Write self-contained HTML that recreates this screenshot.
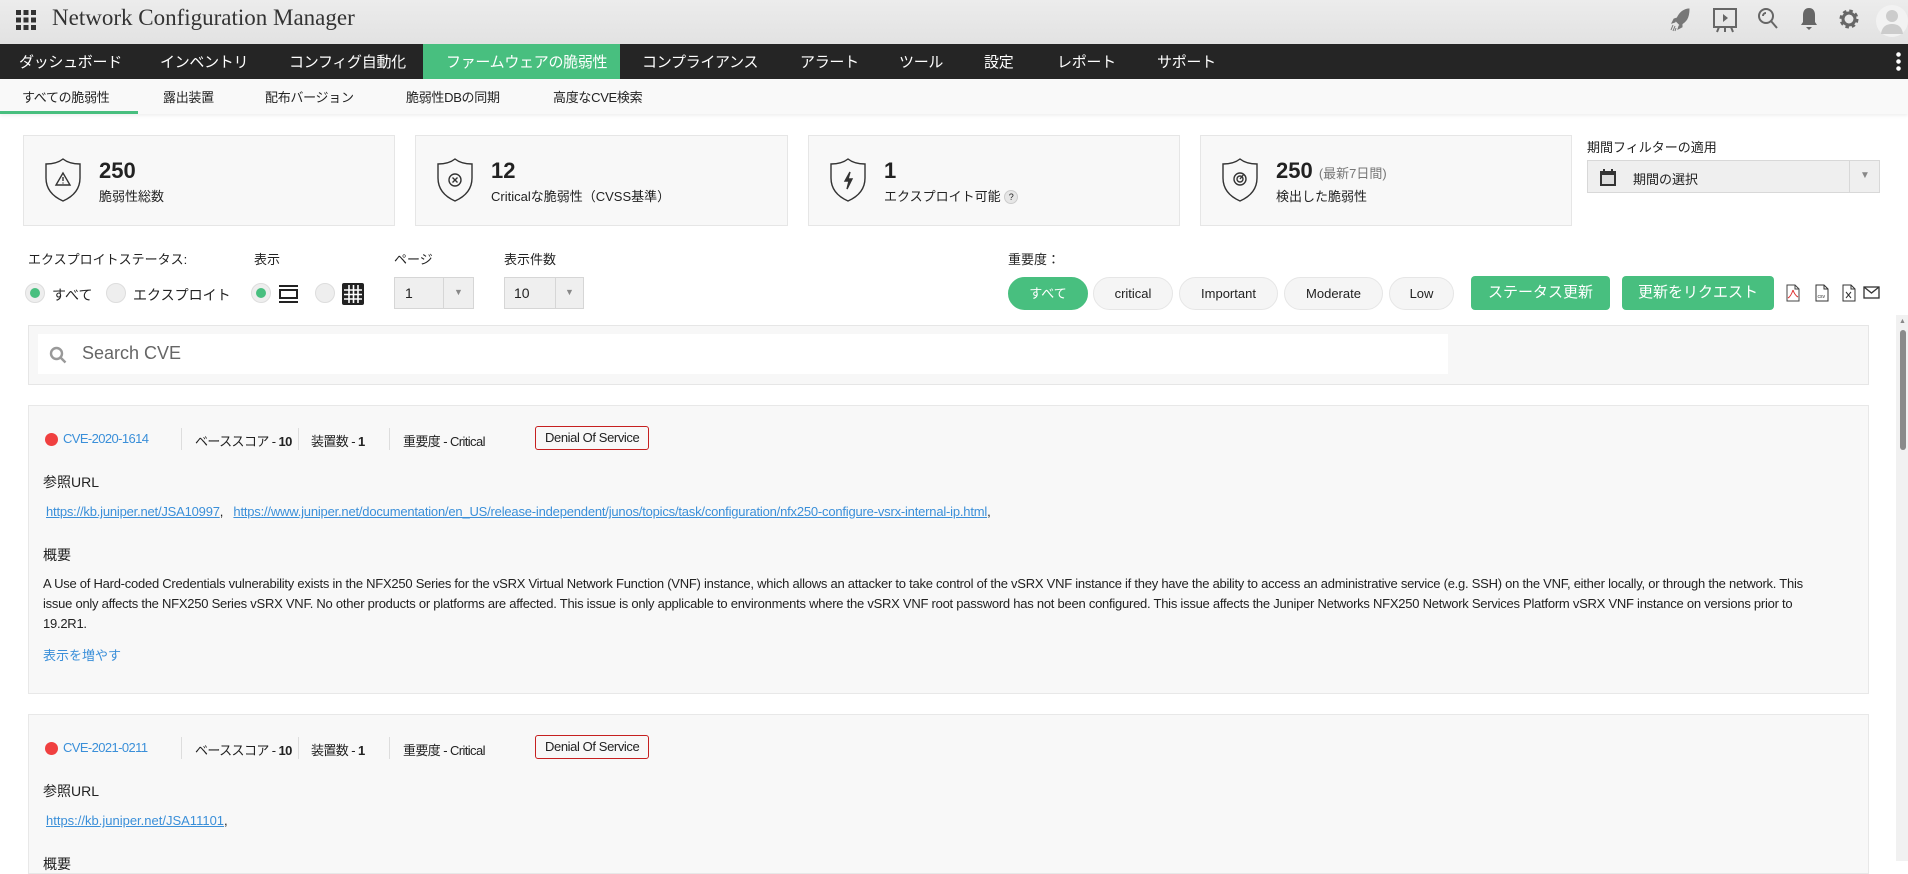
<!DOCTYPE html>
<html><head><meta charset="utf-8"><style>
*{box-sizing:border-box;margin:0;padding:0}
body{width:1908px;height:861px;overflow:hidden;background:#fff;font-family:"Liberation Sans","Noto Sans CJK JP",sans-serif;color:#222;position:relative}
.a{position:absolute;white-space:nowrap}
#top{left:0;top:0;width:1908px;height:44px;background:linear-gradient(#ececec,#e2e2e2)}
#nav{left:0;top:44px;width:1908px;height:35px;background:#252525}
#nav span{position:absolute;top:7px;color:#fff;font-size:15px;letter-spacing:-0.3px}
#sub{left:0;top:79px;width:1908px;height:35px;background:#f9f9f9;box-shadow:0 2px 3px rgba(0,0,0,.06)}
#sub span{position:absolute;top:8px;font-size:13px;color:#222;letter-spacing:-0.3px}
.card{position:absolute;top:135px;height:91px;background:#f8f8f8;border:1px solid #e6e6e6}
.card .n{position:absolute;left:75px;top:22px;font-size:22px;font-weight:bold}
.card .l{position:absolute;left:75px;top:50px;font-size:13px}
.card svg{position:absolute;left:20px;top:22px}
.lbl{font-size:13px;top:249px}
.radio{position:absolute;top:283px;width:20px;height:20px;border-radius:50%;background:#eee;border:1px solid #ddd}
.radio.on::after{content:"";position:absolute;left:4px;top:4px;width:10px;height:10px;border-radius:50%;background:#48bf7f}
.sel{position:absolute;top:277px;height:32px;background:#efefef;border:1px solid #d6d6d6;font-size:14px}
.pill{position:absolute;top:277px;height:33px;border-radius:17px;background:#f5f5f5;border:1px solid #e6e6e6;font-size:13px;text-align:center;line-height:31px}
.btn{position:absolute;top:276px;height:34px;border-radius:4px;background:#48bf7f;color:#fff;font-size:15px;text-align:center;line-height:34px}
.cve{position:absolute;left:28px;width:1841px;background:#f8f8f8;border:1px solid #e8e8e8}
.cve .a{font-size:13px}
.hd{letter-spacing:-0.6px}
.link{color:#3a8fd9}
.u{color:#3a8fd9;text-decoration:underline}
.sep{position:absolute;width:1px;height:22px;background:#ddd}
.badge{position:absolute;border:1px solid #c62020;border-radius:3px;height:24px;padding:0 9px;line-height:22px;font-size:13px;letter-spacing:-0.4px}
.dot{position:absolute;width:13px;height:13px;border-radius:50%;background:#f04040}
.body{font-size:12.6px;line-height:20px;color:#222}
</style></head><body>
<div id="top" class="a"></div>
<svg class="a" style="left:16px;top:10px" width="20" height="20" viewBox="0 0 20 20" fill="#333"><rect x="0" y="0" width="5" height="5"/><rect x="7.5" y="0" width="5" height="5"/><rect x="15" y="0" width="5" height="5"/><rect x="0" y="7.5" width="5" height="5"/><rect x="7.5" y="7.5" width="5" height="5"/><rect x="15" y="7.5" width="5" height="5"/><rect x="0" y="15" width="5" height="5"/><rect x="7.5" y="15" width="5" height="5"/><rect x="15" y="15" width="5" height="5"/></svg>
<div class="a" style="left:52px;top:5px;font-family:'Liberation Serif','DejaVu Serif',serif;font-size:23px;color:#333">Network Configuration Manager</div>
<svg class="a" style="left:1670px;top:8px" width="20" height="24" viewBox="0 0 20 24" fill="#777"><path d="M18 1C12 2 8 7 6 13l4 4c6-3 9-7 9-16zM5 14l-3 1 2-4 3-1zM9 18l-1 3 4-2 0-3zM3 17l-2 5M5 18l-2 5M6 20l-1 3" stroke="#777" stroke-width="1"/></svg>
<svg class="a" style="left:1711px;top:6px" width="28" height="28" viewBox="0 0 28 28" fill="none" stroke="#666" stroke-width="2"><rect x="3" y="3" width="22" height="18"/><path d="M12 8l5 4-5 4z" fill="#666" stroke="none"/><path d="M8 21l-2 5M20 21l2 5M14 21v5"/></svg>
<svg class="a" style="left:1757px;top:7px" width="22" height="24" viewBox="0 0 22 24" fill="none" stroke="#666" stroke-width="2"><circle cx="9" cy="9" r="7"/><path d="M14 14l6 7"/><path d="M6 9a3 3 0 0 1 3-3"/></svg>
<svg class="a" style="left:1800px;top:7px" width="18" height="24" viewBox="0 0 18 24" fill="#666"><path d="M9 1c-4 0-6 3-6 7v7l-2 3h16l-2-3V8c0-4-2-7-6-7zM6 20h6l-3 3z"/></svg>
<svg class="a" style="left:1838px;top:8px" width="22" height="22" viewBox="0 0 22 22"><circle cx="11" cy="11" r="7" fill="none" stroke="#666" stroke-width="5" stroke-dasharray="3 2.5"/><circle cx="11" cy="11" r="6" fill="none" stroke="#666" stroke-width="3"/></svg>
<svg class="a" style="left:1876px;top:2px" width="32" height="38" viewBox="0 0 32 38"><circle cx="16" cy="19" r="16" fill="#f2f2f2"/><circle cx="16" cy="14" r="6" fill="#ccc"/><path d="M5 32c1-8 6-10 11-10s10 2 11 10z" fill="#ccc"/></svg>

<div id="nav" class="a">
<div style="position:absolute;left:423px;top:0;width:197px;height:35px;background:#48bf7f"></div>
<span style="left:19px">ダッシュボード</span><span style="left:160px">インベントリ</span><span style="left:289px">コンフィグ自動化</span><span style="left:446px">ファームウェアの脆弱性</span><span style="left:642px">コンプライアンス</span><span style="left:800px">アラート</span><span style="left:899px">ツール</span><span style="left:984px">設定</span><span style="left:1057px">レポート</span><span style="left:1157px">サポート</span>
<div style="position:absolute;left:1896px;top:7px;width:5px;height:21px;background:radial-gradient(circle,#fff 2px,transparent 2.5px) 0 0/5px 7px"></div>
</div>
<div id="sub" class="a">
<span style="left:22px">すべての脆弱性</span><span style="left:163px">露出装置</span><span style="left:265px">配布バージョン</span><span style="left:406px">脆弱性DBの同期</span><span style="left:553px">高度なCVE検索</span>
<div style="position:absolute;left:0;top:32px;width:138px;height:3px;background:#48bf7f"></div>
</div>

<div class="card" style="left:23px;width:372px"><svg width="38" height="44" viewBox="0 0 38 44" fill="none" stroke="#333" stroke-width="1.4"><path d="M19 1C14 5 8 6 2 6v14c0 12 8 19 17 23 9-4 17-11 17-23V6c-6 0-12-1-17-5z"/><path d="M19 15l-7 12h14z"/><path d="M19 19v4M19 24.5v1"/></svg><div class="n">250</div><div class="l">脆弱性総数</div></div>
<div class="card" style="left:415px;width:373px"><svg width="38" height="44" viewBox="0 0 38 44" fill="none" stroke="#333" stroke-width="1.4"><path d="M19 1C14 5 8 6 2 6v14c0 12 8 19 17 23 9-4 17-11 17-23V6c-6 0-12-1-17-5z"/><circle cx="19" cy="22" r="6"/><path d="M16.5 19.5l5 5M21.5 19.5l-5 5"/></svg><div class="n">12</div><div class="l">Criticalな脆弱性（CVSS基準）</div></div>
<div class="card" style="left:808px;width:372px"><svg width="38" height="44" viewBox="0 0 38 44" fill="none" stroke="#333" stroke-width="1.4"><path d="M19 1C14 5 8 6 2 6v14c0 12 8 19 17 23 9-4 17-11 17-23V6c-6 0-12-1-17-5z"/><path d="M21 14l-5 9h4l-2 8 5-10h-4z" fill="#333"/></svg><div class="n">1</div><div class="l">エクスプロイト可能 <span style="display:inline-block;width:14px;height:14px;border-radius:50%;background:#e6e6e6;border:1px solid #ccc;font-size:9px;text-align:center;line-height:12px;vertical-align:1px">?</span></div></div>
<div class="card" style="left:1200px;width:372px"><svg width="38" height="44" viewBox="0 0 38 44" fill="none" stroke="#333" stroke-width="1.4"><path d="M19 1C14 5 8 6 2 6v14c0 12 8 19 17 23 9-4 17-11 17-23V6c-6 0-12-1-17-5z"/><circle cx="19" cy="21" r="6"/><circle cx="19" cy="21" r="3"/><path d="M19 21l4-5"/></svg><div class="n">250 <span style="font-size:13px;font-weight:normal;color:#777">(最新7日間)</span></div><div class="l">検出した脆弱性</div></div>

<div class="a" style="left:1587px;top:137px;font-size:13px">期間フィルターの適用</div>
<div class="a" style="left:1587px;top:160px;width:293px;height:33px;background:#efefef;border:1px solid #d8d8d8">
<svg style="position:absolute;left:12px;top:8px" width="16" height="17" viewBox="0 0 16 17"><rect x="0" y="2" width="16" height="15" fill="#333"/><rect x="2" y="6" width="12" height="9" fill="#ddd"/><rect x="3" y="0" width="2" height="4" fill="#333"/><rect x="11" y="0" width="2" height="4" fill="#333"/></svg>
<span style="position:absolute;left:45px;top:8px;font-size:13px">期間の選択</span>
<div style="position:absolute;left:261px;top:0;width:1px;height:31px;background:#d8d8d8"></div>
<span style="position:absolute;left:272px;top:9px;font-size:10px;color:#888">▼</span></div>

<div class="a lbl" style="left:28px">エクスプロイトステータス:</div>
<div class="a lbl" style="left:254px">表示</div>
<div class="a lbl" style="left:394px">ページ</div>
<div class="a lbl" style="left:504px">表示件数</div>
<div class="radio on" style="left:25px"></div><div class="a" style="left:52px;top:285px;font-size:14px">すべて</div>
<div class="radio" style="left:106px"></div><div class="a" style="left:133px;top:285px;font-size:14px">エクスプロイト</div>
<div class="radio on" style="left:251px"></div>
<svg class="a" style="left:279px;top:285px" width="19" height="18" viewBox="0 0 19 18" fill="none" stroke="#222" stroke-width="2"><path d="M0 1h19M0 17h19"/><rect x="1" y="5" width="17" height="8"/></svg>
<div class="radio" style="left:315px"></div>
<svg class="a" style="left:342px;top:283px" width="22" height="22" viewBox="0 0 22 22"><rect x="0" y="0" width="22" height="22" rx="2" fill="#222"/><path d="M2 7h18M2 11.5h18M2 16h18M7 2v18M11.5 2v18M16 2v18" stroke="#fff" stroke-width="1.6"/></svg>
<div class="sel" style="left:394px;width:80px"><span style="position:absolute;left:10px;top:7px">1</span><div style="position:absolute;left:48px;top:0;width:1px;height:30px;background:#d6d6d6"></div><span style="position:absolute;left:59px;top:9px;font-size:9px;color:#888">▼</span></div>
<div class="sel" style="left:504px;width:80px"><span style="position:absolute;left:9px;top:7px">10</span><div style="position:absolute;left:50px;top:0;width:1px;height:30px;background:#d6d6d6"></div><span style="position:absolute;left:60px;top:9px;font-size:9px;color:#888">▼</span></div>

<div class="a" style="left:1008px;top:249px;font-size:13px">重要度：</div>
<div class="pill" style="left:1008px;width:80px;background:#48bf7f;border-color:#48bf7f;color:#fff">すべて</div>
<div class="pill" style="left:1093px;width:80px">critical</div>
<div class="pill" style="left:1179px;width:99px">Important</div>
<div class="pill" style="left:1284px;width:99px">Moderate</div>
<div class="pill" style="left:1389px;width:65px">Low</div>
<div class="btn" style="left:1471px;width:139px">ステータス更新</div>
<div class="btn" style="left:1622px;width:152px">更新をリクエスト</div>
<svg class="a" style="left:1786px;top:284px" width="14" height="18" viewBox="0 0 14 18" fill="none" stroke="#444"><path d="M1 1h8l4 4v12H1z"/><path d="M9 1v4h4" /><path d="M7 6c-1 3-3 7-5 8M7 6c1 3 3 6 5 7" stroke="#d33"/></svg>
<svg class="a" style="left:1815px;top:284px" width="14" height="18" viewBox="0 0 14 18" fill="none" stroke="#333"><path d="M1 1h8l4 4v12H1z"/><path d="M9 1v4h4"/><text x="2.5" y="14" font-size="5" fill="#333" stroke="none" font-family="Liberation Sans">csv</text></svg>
<svg class="a" style="left:1842px;top:284px" width="14" height="18" viewBox="0 0 14 18" fill="none" stroke="#333"><path d="M1 1h8l4 4v12H1z"/><path d="M9 1v4h4"/><path d="M4 8l5 6M9 8l-5 6"/></svg>
<svg class="a" style="left:1863px;top:286px" width="17" height="13" viewBox="0 0 17 13" fill="none" stroke="#333" stroke-width="1.3"><rect x="1" y="1" width="15" height="11"/><path d="M1 1l7.5 6L16 1"/></svg>

<div class="a" style="left:28px;top:325px;width:1841px;height:60px;background:#f7f7f7;border:1px solid #e6e6e6">
<div style="position:absolute;left:9px;top:8px;width:1410px;height:40px;background:#fff"></div>
<svg style="position:absolute;left:20px;top:20px" width="18" height="18" viewBox="0 0 18 18" fill="none" stroke="#999" stroke-width="2.4"><circle cx="7.5" cy="7.5" r="5.5"/><path d="M11.5 11.5l5 5"/></svg>
<span style="position:absolute;left:53px;top:17px;font-size:18px;color:#666">Search CVE</span></div>

<div class="cve" style="top:405px;height:289px">
<div class="dot" style="left:16px;top:27px"></div>
<div class="a link hd" style="left:34px;top:25px">CVE-2020-1614</div>
<div class="sep" style="left:152px;top:22px"></div>
<div class="a hd" style="left:166px;top:25px">ベーススコア - <b>10</b></div>
<div class="sep" style="left:269px;top:22px"></div>
<div class="a hd" style="left:282px;top:25px">装置数 - <b>1</b></div>
<div class="sep" style="left:360px;top:22px"></div>
<div class="a hd" style="left:374px;top:25px">重要度 - Critical</div>
<div class="badge" style="left:506px;top:20px">Denial Of Service</div>
<div class="a" style="left:14px;top:66px;font-size:14px">参照URL</div>
<div class="a" style="left:17px;top:98px;letter-spacing:-0.2px"><span class="u">https://kb.juniper.net/JSA10997</span>,&nbsp;&nbsp; <span class="u">https://www.juniper.net/documentation/en_US/release-independent/junos/topics/task/configuration/nfx250-configure-vsrx-internal-ip.html</span>,</div>
<div class="a" style="left:14px;top:139px;font-size:14px">概要</div>
<div class="a body" style="left:14px;top:168px;letter-spacing:-0.25px">A Use of Hard-coded Credentials vulnerability exists in the NFX250 Series for the vSRX Virtual Network Function (VNF) instance, which allows an attacker to take control of the vSRX VNF instance if they have the ability to access an administrative service (e.g. SSH) on the VNF, either locally, or through the network. This<br>issue only affects the NFX250 Series vSRX VNF. No other products or platforms are affected. This issue is only applicable to environments where the vSRX VNF root password has not been configured. This issue affects the Juniper Networks NFX250 Network Services Platform vSRX VNF instance on versions prior to<br>19.2R1.</div>
<div class="a link" style="left:14px;top:239px">表示を増やす</div>
</div>

<div class="cve" style="top:714px;height:160px">
<div class="dot" style="left:16px;top:27px"></div>
<div class="a link hd" style="left:34px;top:25px">CVE-2021-0211</div>
<div class="sep" style="left:152px;top:22px"></div>
<div class="a hd" style="left:166px;top:25px">ベーススコア - <b>10</b></div>
<div class="sep" style="left:269px;top:22px"></div>
<div class="a hd" style="left:282px;top:25px">装置数 - <b>1</b></div>
<div class="sep" style="left:360px;top:22px"></div>
<div class="a hd" style="left:374px;top:25px">重要度 - Critical</div>
<div class="badge" style="left:506px;top:20px">Denial Of Service</div>
<div class="a" style="left:14px;top:66px;font-size:14px">参照URL</div>
<div class="a" style="left:17px;top:98px"><span class="u">https://kb.juniper.net/JSA11101</span>,</div>
<div class="a" style="left:14px;top:139px;font-size:14px">概要</div>
</div>

<div class="a" style="left:1896px;top:315px;width:12px;height:546px;background:#f1f1f1"></div>
<div class="a" style="left:1899px;top:318px;font-size:7px;color:#888">▲</div>
<div class="a" style="left:1900px;top:330px;width:6px;height:120px;border-radius:3px;background:#8a8a8a"></div>
</body></html>
